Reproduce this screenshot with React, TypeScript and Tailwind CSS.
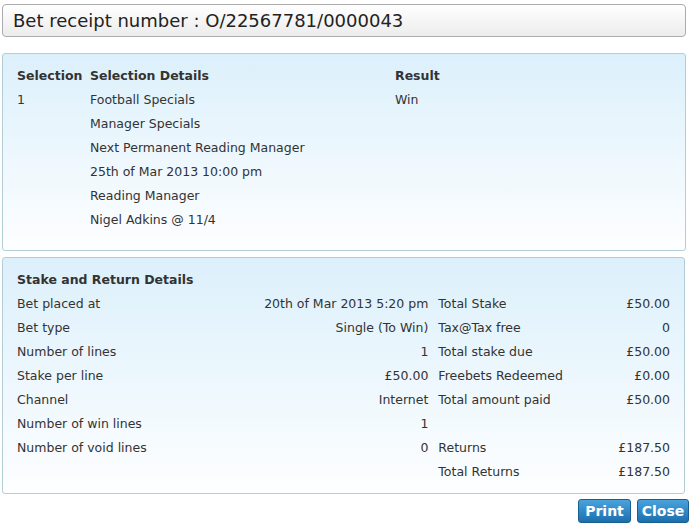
import { Fragment } from "react";

const selectionDetails = [
  "Football Specials",
  "Manager Specials",
  "Next Permanent Reading Manager",
  "25th of Mar 2013 10:00 pm",
  "Reading Manager",
  "Nigel Adkins @ 11/4",
];

const stakeRows: [string, string, string, string][] = [
  ["Bet placed at", "20th of Mar 2013 5:20 pm", "Total Stake", "£50.00"],
  ["Bet type", "Single (To Win)", "Tax@Tax free", "0"],
  ["Number of lines", "1", "Total stake due", "£50.00"],
  ["Stake per line", "£50.00", "Freebets Redeemed", "£0.00"],
  ["Channel", "Internet", "Total amount paid", "£50.00"],
  ["Number of win lines", "1", "", ""],
  ["Number of void lines", "0", "Returns", "£187.50"],
  ["", "", "Total Returns", "£187.50"],
];

function Panel({ className, children }: { className: string; children: React.ReactNode }) {
  return (
    <div
      className={`mx-[2px] rounded-[3px] border border-[#b3cdd6] bg-gradient-to-b from-[#dcf0fb] to-[#fdfeff] ${className}`}
    >
      {children}
    </div>
  );
}

export default function App() {
  return (
    <div
      className="w-[694px] h-[524px] bg-white text-[12.5px] text-[#333] pt-[4px] overflow-hidden"
      style={{ fontFamily: '"DejaVu Sans", Verdana, sans-serif' }}
    >
      <div className="mx-[2px] mr-[8px] h-[33px] rounded-[4px] border border-[#acacac] bg-gradient-to-b from-white to-[#ececec] flex items-center pl-[10px] text-[18px] text-[#222]">
        Bet receipt number : O/22567781/0000043
      </div>

      <Panel className="mt-[16px] mr-[8px] h-[198px] pt-[10px] px-[14px]">
        <div className="grid grid-cols-[73px_305px_1fr] leading-[24px]">
          <div className="font-bold">Selection</div>
          <div className="font-bold">Selection Details</div>
          <div className="font-bold">Result</div>
          <div>1</div>
          <div>{selectionDetails[0]}</div>
          <div>Win</div>
          {selectionDetails.slice(1).map((d) => (
            <Fragment key={d}>
              <div />
              <div>{d}</div>
              <div />
            </Fragment>
          ))}
        </div>
      </Panel>

      <Panel className="mt-[6px] mr-[9px] h-[237px] pt-[10px] px-[14px]">
        <div className="font-bold leading-[24px]">Stake and Return Details</div>
        {stakeRows.map(([a, b, c, d], i) => (
          <div key={i} className="flex leading-[24px] h-[24px]">
            <div className="w-[190px]">{a}</div>
            <div className="w-[222px] text-right">{b}</div>
            <div className="ml-[10px] w-[150px]">{c}</div>
            <div className="w-[82px] text-right">{d}</div>
          </div>
        ))}
      </Panel>

      <div className="flex justify-end gap-[6px] mt-[5px] pr-[5px]">
        <button className="h-[24px] w-[53px] rounded-[3px] border border-[#1a5f8f] bg-gradient-to-b from-[#4aa3dd] to-[#1a6fad] text-white font-bold text-[14px] leading-none">
          Print
        </button>
        <button className="h-[24px] w-[52px] rounded-[3px] border border-[#1a5f8f] bg-gradient-to-b from-[#4aa3dd] to-[#1a6fad] text-white font-bold text-[14px] leading-none">
          Close
        </button>
      </div>
    </div>
  );
}
